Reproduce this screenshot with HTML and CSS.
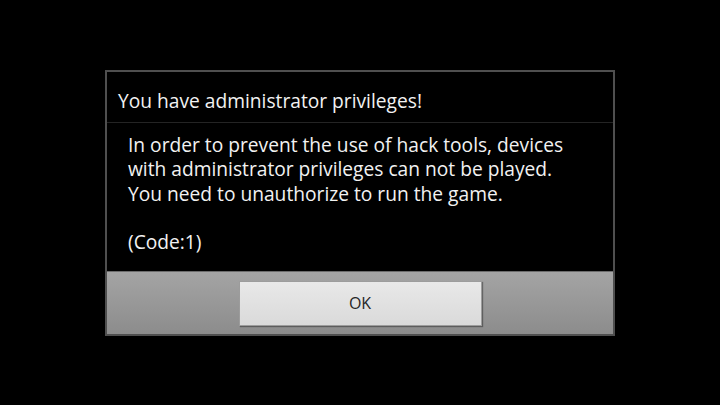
FILE: index.html
```html
<!DOCTYPE html>
<html lang="en">
<head>
    <meta charset="UTF-8">
    <meta name="viewport" content="width=device-width, initial-scale=1.0">
    <title>Alert</title>
    <link rel="stylesheet" href="styles.css">
</head>
<body>
    <div class="dialog">
        <div class="dialog-title">You have administrator privileges!</div>
        <div class="dialog-body">
            <p>In order to prevent the use of hack tools, devices<br>with administrator privileges can not be played.<br>You need to unauthorize to run the game.</p>
            <p>(Code:1)</p>
        </div>
        <div class="dialog-footer">
            <button class="dialog-button">OK</button>
        </div>
    </div>
</body>
</html>
```

FILE: styles.css
```css
html, body {
    height: 100%;
}
body {
    margin: 0;
    background-color: #000;
    font-family: 'Open Sans', 'Noto Sans', sans-serif;
    display: flex;
    align-items: center;
    justify-content: center;
}
.dialog {
    width: 506px;
    border: 2px solid #4f4f4f;
    background-color: #000;
    display: flex;
    flex-direction: column;
}
.dialog-title {
    height: 50px;
    padding-left: 11px;
    color: #f2f2f2;
    font-size: 19.2px;
    line-height: 58px;
    border-bottom: 1px solid #242424;
}
.dialog-body {
    height: 148px;
    padding: 10px 21px 0;
    box-sizing: border-box;
    color: #f2f2f2;
    font-size: 19.2px;
    line-height: 24.5px;
}
.dialog-body p {
    margin: 0 0 24px;
}
.dialog-footer {
    height: 62px;
    border-top: 1px solid #6c6c6c;
    background: linear-gradient(#a4a4a4, #8c8c8c);
    display: flex;
    align-items: center;
    justify-content: center;
}
.dialog-button {
    width: 243px;
    height: 45px;
    margin-top: 1px;
    border: 1px solid #9c9c9c;
    background: linear-gradient(#e8e8e8, #dadada);
    box-shadow: 1px 1px 1px rgba(0, 0, 0, 0.35);
    font-family: 'Open Sans', 'Noto Sans', sans-serif;
    font-size: 16px;
    color: #262626;
    padding: 0;
}
```
